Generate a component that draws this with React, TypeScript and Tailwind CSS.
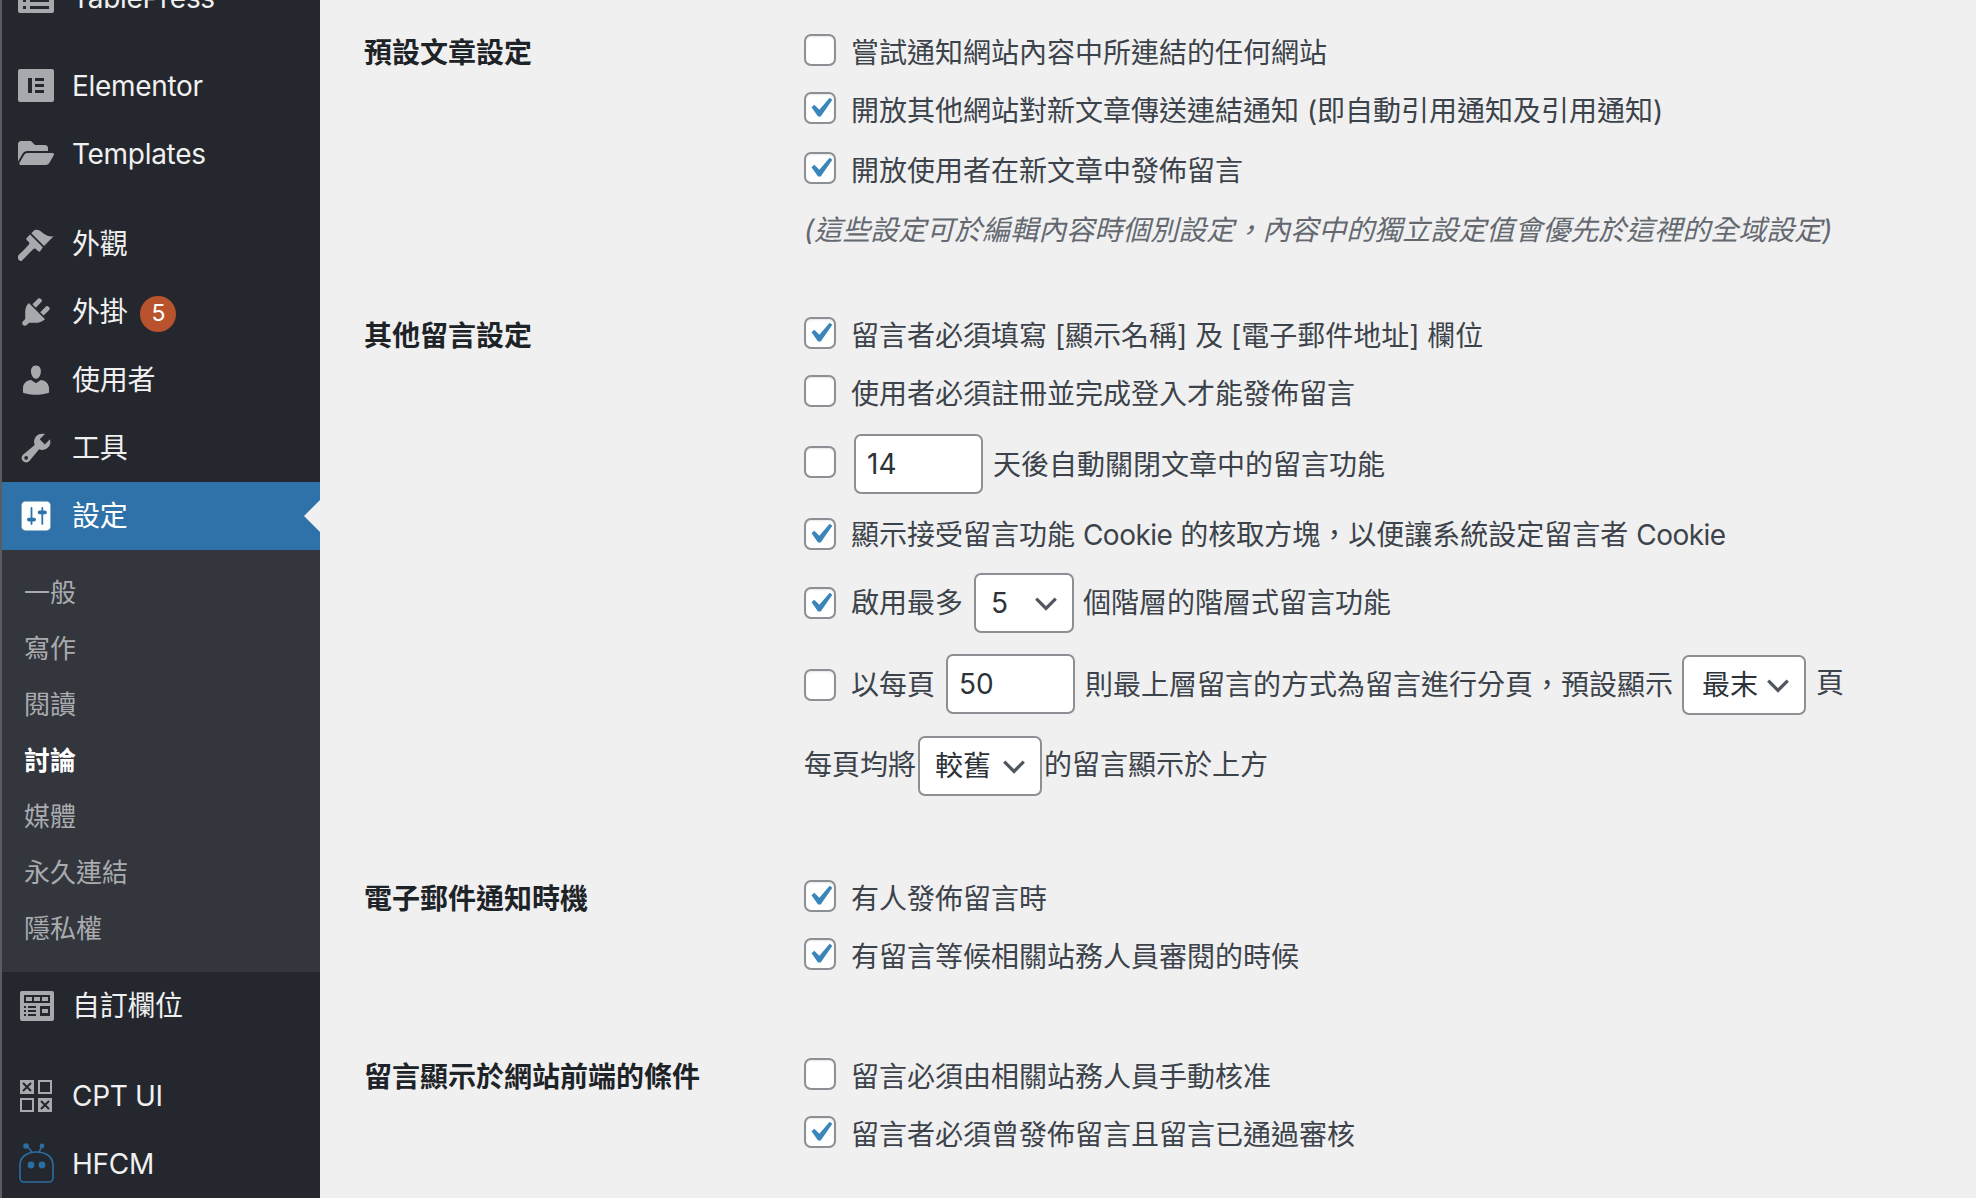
import { ReactNode } from 'react';
import { FaFolderOpen } from 'react-icons/fa';

const iconClass = 'h-9 w-9 fill-[#a7aaad]';

function Dashicon({ d, className = iconClass }: { d: string; className?: string }) {
  return (
    <svg viewBox="0 0 20 20" className={className}>
      <path d={d} />
    </svg>
  );
}

const TableIcon = () => (
  <svg viewBox="0 0 36 36" className={iconClass}>
    <path d="M2 3h32a2 2 0 0 1 2 2v26a2 2 0 0 1-2 2H2a2 2 0 0 1-2-2V5a2 2 0 0 1 2-2zm3 6v6h26V9H5zm0 10v3h3v-3H5zm7 0v3h19v-3H12zM5 26v3h3v-3H5zm7 0v3h19v-3H12z" fillRule="evenodd" />
  </svg>
);

const ElementorIcon = () => (
  <svg viewBox="0 0 36 36" className={iconClass}>
    <path
      fillRule="evenodd"
      d="M2 1h32a2 2 0 0 1 2 2v29a2 2 0 0 1-2 2H2a2 2 0 0 1-2-2V3a2 2 0 0 1 2-2zm8 9v15h4V10h-4zm7 0v3h9v-3h-9zm0 6v3h9v-3h-9zm0 6v3h9v-3h-9z"
    />
  </svg>
);

const FieldsIcon = () => (
  <svg viewBox="0 0 34 30" className="ml-[1px] h-[30px] w-[34px] fill-[#24272d]">
    <rect width="34" height="30" rx="2" className="fill-[#a7aaad]" />
    <rect x="4" y="4" width="26" height="8" />
    <rect x="6" y="6" width="6" height="4" className="fill-[#a7aaad]" />
    <rect x="14" y="6" width="6" height="4" className="fill-[#a7aaad]" />
    <rect x="22" y="6" width="6" height="4" className="fill-[#a7aaad]" />
    <rect x="4" y="15" width="2" height="2" />
    <rect x="8" y="15" width="8" height="2" />
    <rect x="4" y="19" width="2" height="2" />
    <rect x="8" y="19" width="8" height="2" />
    <rect x="4" y="23" width="2" height="2" />
    <rect x="8" y="23" width="8" height="2" />
    <rect x="20" y="15" width="10" height="10" />
    <rect x="22" y="18" width="6" height="4" className="fill-[#a7aaad]" />
  </svg>
);

const CptIcon = () => (
  <svg viewBox="0 0 32 32" className="h-8 w-8 fill-none stroke-[#a7aaad] stroke-2">
    <rect x="0" y="0" width="14" height="14" className="fill-[#a7aaad] stroke-none" />
    <path d="M3 3l8 8M11 3l-8 8" className="stroke-[#24272d]" />
    <rect x="19" y="1" width="12" height="12" />
    <rect x="1" y="19" width="12" height="12" />
    <rect x="18" y="18" width="14" height="14" className="fill-[#a7aaad] stroke-none" />
    <path d="M21 21l8 8M29 21l-8 8" className="stroke-[#24272d]" />
  </svg>
);

const RobotIcon = () => (
  <svg viewBox="0 0 36 40" className="-mt-[2px] h-10 w-9 fill-none stroke-[#2a6ea3] stroke-[1.6]">
    <path d="M8 2l6 7M24 3l-3 6" />
    <circle cx="8" cy="3" r="2" className="fill-[#2a6ea3]" />
    <circle cx="24" cy="3" r="1.6" className="fill-[#2a6ea3]" />
    <path d="M2 22c0-8 7-13 16.5-13s16.5 5 16.5 13v13a4 4 0 0 1-4 4H6a4 4 0 0 1-4-4z" />
    <circle cx="13" cy="22" r="2.6" className="fill-[#2a6ea3]" />
    <circle cx="24" cy="22" r="2.6" className="fill-[#2a6ea3]" />
  </svg>
);

const paths = {
  brush:
    'M14.48 11.06L7.41 3.99l1.5-1.5c.5-.56 2.3-.47 3.51.32 1.21.8 1.43 1.28 2.91 2.1 1.18.64 2.45 1.26 4.45.85zm-.71.71L6.7 4.7 4.93 6.47c-.39.39-.39 1.02 0 1.41l1.06 1.06c.39.39.39 1.03 0 1.42-.6.6-6.23 6.39-6.23 6.39-.39.39-.39 1.02 0 1.41l1.06 1.06c.39.39 1.02.39 1.41 0 0 0 5.73-5.79 6.33-6.39.39-.39 1.03-.39 1.42 0l1.06 1.06c.39.39 1.02.39 1.41 0z',
  plug: 'M13.11 4.36L9.87 7.6 8 5.73l3.24-3.24c.35-.34 1.05-.2 1.56.32.52.51.66 1.21.31 1.55zm-8 1.77l.91-1.12 9.01 9.01-1.19.84c-.71.71-2.63 1.16-3.82 1.16H6.14L4.9 17.26c-.59.59-1.54.59-2.12 0-.59-.58-.59-1.53 0-2.12l1.24-1.24v-3.88c0-1.13.4-3.19 1.09-3.89zm7.26 3.97l3.24-3.24c.34-.35 1.04-.21 1.55.31.52.51.66 1.21.31 1.55l-3.24 3.25z',
  user: 'M10 9.25c-2.27 0-2.73-3.44-2.73-3.44C7 4.02 7.82 2 9.97 2c2.16 0 2.98 2.02 2.71 3.81 0 0-.41 3.44-2.68 3.44zm0 2.57L12.72 10c2.39 0 4.52 2.33 4.52 4.53v2.49s-3.65 1.13-7.24 1.13c-3.65 0-7.24-1.13-7.24-1.13v-2.49c0-2.25 1.94-4.48 4.47-4.48z',
  wrench:
    'M16.68 9.77c-1.34 1.34-3.3 1.67-4.95.99l-5.41 6.52c-.99.99-2.59.99-3.58 0s-.99-2.59 0-3.57l6.52-5.42c-.68-1.65-.35-3.61.99-4.95 1.28-1.28 3.12-1.62 4.72-1.06l-2.89 2.89 2.82 2.82 2.86-2.87c.53 1.58.18 3.39-1.08 4.65zM3.81 16.21c.4.39 1.04.39 1.43 0 .4-.4.4-1.04 0-1.43-.39-.4-1.03-.4-1.43 0-.39.39-.39 1.03 0 1.43z',
  settings:
    'M18 16V4c0-1.1-.9-2-2-2H4c-1.1 0-2 .9-2 2v12c0 1.1.9 2 2 2h12c1.1 0 2-.9 2-2zM8 11h1c.55 0 1 .45 1 1s-.45 1-1 1H8v1.5c0 .28-.22.5-.5.5s-.5-.22-.5-.5V13H6c-.55 0-1-.45-1-1s.45-1 1-1h1V5.5c0-.28.22-.5.5-.5s.5.22.5.5V11zm5-2h-1c-.55 0-1-.45-1-1s.45-1 1-1h1V5.5c0-.28.22-.5.5-.5s.5.22.5.5V7h1c.55 0 1 .45 1 1s-.45 1-1 1h-1v5.5c0 .28-.22.5-.5.5s-.5-.22-.5-.5V9z',
};

function MenuItem({ icon, label, className = '', badge }: { icon: ReactNode; label: string; className?: string; badge?: string }) {
  return (
    <div className={`flex h-[68px] items-center text-[28px] text-[#f0f0f1] ${className}`}>
      <span className="ml-[16px] flex w-9 justify-center">{icon}</span>
      <span className="ml-[18px] tracking-[-0.3px]">{label}</span>
      {badge && (
        <span className="ml-[13px] mt-[3px] flex h-9 w-9 items-center justify-center rounded-full bg-[#b9532d] text-[23px] text-white">
          {badge}
        </span>
      )}
    </div>
  );
}

const subItems = ['一般', '寫作', '閱讀', '討論', '媒體', '永久連結', '隱私權'];

function Sidebar() {
  return (
    <aside className="h-[1198px] w-[320px] shrink-0 overflow-hidden border-l-2 border-[#5a5c60] bg-[#24272d]">
      <div className="-mt-[36px]">
        <MenuItem icon={<TableIcon />} label="TablePress" />
        <MenuItem icon={<ElementorIcon />} label="Elementor" className="mt-[20px]" />
        <MenuItem icon={<FaFolderOpen className="-mt-[3px] h-8 w-9 text-[#a7aaad]" />} label="Templates" />
        <MenuItem icon={<Dashicon d={paths.brush} />} label="外觀" className="mt-[22px]" />
        <MenuItem icon={<Dashicon d={paths.plug} />} label="外掛" badge="5" />
        <MenuItem icon={<Dashicon d={paths.user} />} label="使用者" />
        <MenuItem icon={<Dashicon d={paths.wrench} />} label="工具" />
        <div className="relative -ml-[2px] bg-[#2e72a9] pl-[2px]">
          <MenuItem icon={<Dashicon d={paths.settings} className="h-10 w-10 fill-white" />} label="設定" className="text-white" />
          <span className="absolute right-0 top-[18px] h-0 w-0 border-y-[16px] border-r-[16px] border-y-transparent border-r-[#f0f0f1]" />
        </div>
        <div className="bg-[#33373d] pb-[16px] pt-[14px]">
          {subItems.map((item) => (
            <div
              key={item}
              className={`flex h-[56px] items-center pl-[22px] text-[26px] ${item === '討論' ? 'font-bold text-white' : 'text-[#a9abaf]'}`}
            >
              {item}
            </div>
          ))}
        </div>
        <MenuItem icon={<FieldsIcon />} label="自訂欄位" />
        <MenuItem icon={<CptIcon />} label="CPT UI" className="mt-[22px]" />
        <MenuItem icon={<RobotIcon />} label="HFCM" />
      </div>
    </aside>
  );
}

function Checkbox({ checked, className = '-mt-[6px]' }: { checked?: boolean; className?: string }) {
  return (
    <span className={`flex h-8 w-8 shrink-0 items-center justify-center rounded-[7px] border-2 border-[#8c8f94] bg-white shadow-[inset_0_1px_2px_rgba(0,0,0,0.1)] ${className}`}>
      {checked && (
        <svg viewBox="0 0 20 20" className="h-10 w-10 shrink-0 fill-[#3a85b9]">
          <path d="M14.83 4.89l1.34.94-5.81 8.38H9.02L5.78 9.67l1.34-1.25 2.57 2.4z" />
        </svg>
      )}
    </span>
  );
}

function NumberBox({ value, className }: { value: string; className: string }) {
  return (
    <span className={`flex h-[60px] -translate-y-[1px] items-center rounded-[7px] border-2 border-[#8c8f94] bg-white pl-[11px] text-[28px] text-[#2c3338] ${className}`}>
      {value}
    </span>
  );
}

function SelectBox({ value, className }: { value: string; className: string }) {
  return (
    <span className={`flex h-[60px] items-center justify-between rounded-[7px] border-2 border-[#8c8f94] bg-white pl-[15px] pr-[13px] text-[28px] text-[#2c3338] ${className}`}>
      {value}
      <svg viewBox="0 0 24 24" className="h-[26px] w-[26px] shrink-0 fill-none stroke-[#50575e] stroke-[3]">
        <path d="M3 8l9 9 9-9" />
      </svg>
    </span>
  );
}

function Row({ h, children }: { h: string; children: ReactNode }) {
  return <div className={`flex items-center whitespace-nowrap ${h}`}>{children}</div>;
}

function Option({ h, checked, boxClass, children }: { h: string; checked?: boolean; boxClass?: string; children: ReactNode }) {
  return (
    <Row h={h}>
      <Checkbox checked={checked} className={boxClass} />
      <span className="ml-[15px] flex items-center">{children}</span>
    </Row>
  );
}

function Section({ title, className = '', children }: { title: string; className?: string; children: ReactNode }) {
  return (
    <section className={`grid grid-cols-[440px_1fr] ${className}`}>
      <h2 className="flex h-[58px] items-center text-[28px] font-bold text-[#1d2327]">{title}</h2>
      <div>{children}</div>
    </section>
  );
}

export default function App() {
  return (
    <div className="flex h-[1198px] w-[1976px] overflow-hidden bg-[#f0f0f1] font-['Inter','Noto_Sans_CJK_TC',sans-serif] text-[28px] text-[#3c434a]">
      <Sidebar />
      <main className="min-w-0 flex-1 pl-[44px] pt-[24px]">
        <Section title="預設文章設定">
          <Option h="h-[58px]">嘗試通知網站內容中所連結的任何網站</Option>
          <Option h="h-[58px]" checked>開放其他網站對新文章傳送連結通知 (即自動引用通知及引用通知)</Option>
          <Option h="h-[62px]" checked>開放使用者在新文章中發佈留言</Option>
          <Row h="h-[56px]">
            <span className="italic text-[#646970]">(這些設定可於編輯內容時個別設定，內容中的獨立設定值會優先於這裡的全域設定)</span>
          </Row>
        </Section>
        <Section title="其他留言設定" className="mt-[49px]">
          <Option h="h-[58px]" checked>留言者必須填寫 [顯示名稱] 及 [電子郵件地址] 欄位</Option>
          <Option h="h-[58px]">使用者必須註冊並完成登入才能發佈留言</Option>
          <Option h="h-[84px]">
            <NumberBox value="14" className="ml-[3px] w-[129px]" />
            <span className="ml-[10px]">天後自動關閉文章中的留言功能</span>
          </Option>
          <Option h="h-[56px]" checked boxClass="-mt-[3px]">
            <span className="whitespace-pre">顯示接受留言功能 <span className="tracking-[-0.5px]">Cookie</span> 的核取方塊，以便讓系統設定留言者 <span className="tracking-[-0.5px]">Cookie</span></span>
          </Option>
          <Option h="h-[80px]" checked boxClass="mt-0">
            啟用最多
            <SelectBox value="5" className="ml-[11px] w-[100px]" />
            <span className="ml-[9px]">個階層的階層式留言功能</span>
          </Option>
          <Option h="h-[84px]" boxClass="mt-0">
            以每頁
            <NumberBox value="50" className="ml-[11px] w-[129px]" />
            <span className="ml-[10px]">則最上層留言的方式為留言進行分頁，預設顯示</span>
            <SelectBox value="最末" className="ml-[9px] w-[124px] pl-[18px]" />
            <span className="ml-[10px] -translate-y-[2px]">頁</span>
          </Option>
          <Row h="h-[76px]">
            每頁均將
            <SelectBox value="較舊" className="ml-[2px] w-[124px] translate-y-[1px]" />
            <span className="ml-[2px]">的留言顯示於上方</span>
          </Row>
        </Section>
        <Section title="電子郵件通知時機" className="mt-[67px]">
          <Option h="h-[58px]" checked>有人發佈留言時</Option>
          <Option h="h-[58px]" checked>有留言等候相關站務人員審閱的時候</Option>
        </Section>
        <Section title="留言顯示於網站前端的條件" className="mt-[62px]">
          <Option h="h-[58px]">留言必須由相關站務人員手動核准</Option>
          <Option h="h-[58px]" checked>留言者必須曾發佈留言且留言已通過審核</Option>
        </Section>
      </main>
    </div>
  );
}
